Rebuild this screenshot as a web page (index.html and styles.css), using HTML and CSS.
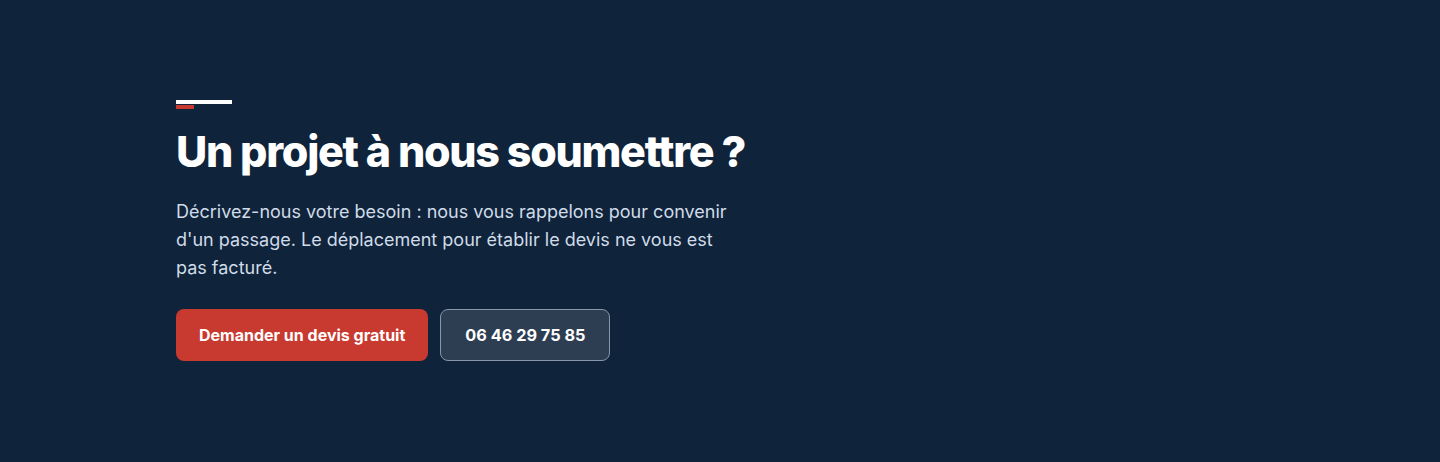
FILE: index.html
```html
<!DOCTYPE html>
<html lang="fr">
<head>
  <meta charset="UTF-8">
  <meta name="viewport" content="width=device-width, initial-scale=1.0">
  <title>Un projet à nous soumettre ?</title>
  <link rel="stylesheet" href="styles.css">
</head>
<body>
  <section class="cta">
    <div class="cta-inner">
      <div class="accent"><span class="accent-line"></span><span class="accent-red"></span></div>
      <h2>Un projet à nous soumettre&nbsp;?</h2>
      <p>Décrivez-nous votre besoin : nous vous rappelons pour convenir d'un passage. Le déplacement pour établir le devis ne vous est pas facturé.</p>
      <div class="button-group">
        <a class="btn btn-primary" href="#devis">Demander un devis gratuit</a>
        <a class="btn btn-phone" href="tel:0646297585">06 46 29 75 85</a>
      </div>
    </div>
  </section>
</body>
</html>
```

FILE: styles.css
```css
body {
  margin: 0;
  padding: 0;
  background-color: #0f233a;
  font-family: Inter, "Noto Sans", sans-serif;
}

.cta {
  height: 462px;
  box-sizing: border-box;
  padding: 100px 176px 0;
}

.cta-inner {
  max-width: 640px;
}

.accent {
  display: flex;
  flex-direction: column;
  gap: 1px;
}

.accent-line {
  display: block;
  width: 56px;
  height: 4px;
  background-color: #ffffff;
}

.accent-red {
  display: block;
  width: 18px;
  height: 4px;
  background-color: #c8392f;
}

h2 {
  margin: 15px 0 0;
  color: #ffffff;
  font-size: 43px;
  font-weight: 800;
  line-height: 54px;
  letter-spacing: -0.03em;
}

p {
  max-width: 560px;
  margin: 20px 0 0;
  color: #cfdbe8;
  font-size: 18px;
  line-height: 28px;
}

.button-group {
  display: flex;
  gap: 12px;
  margin-top: 27px;
}

.btn {
  display: inline-flex;
  align-items: center;
  justify-content: center;
  height: 52px;
  box-sizing: border-box;
  padding: 0 23px;
  border-radius: 8px;
  color: #ffffff;
  font-size: 16px;
  font-weight: 700;
  text-decoration: none;
}

.btn-primary {
  background-color: #c8392f;
}

.btn-phone {
  padding: 0 24px;
  background-color: #2d3e52;
  border: 1px solid #8796a8;
  font-size: 16.3px;
}
```
